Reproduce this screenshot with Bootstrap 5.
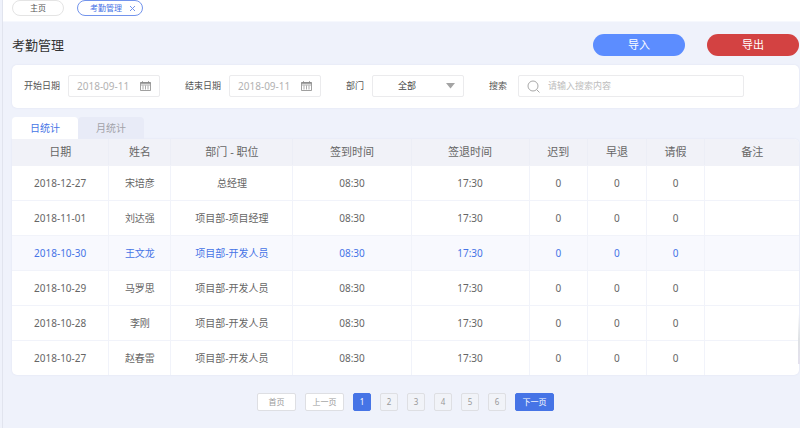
<!DOCTYPE html>
<html lang="zh-CN">
<head>
<meta charset="utf-8">
<meta name="viewport" content="width=device-width, initial-scale=1">
<title>考勤管理</title>
<link href="https://cdn.jsdelivr.net/npm/bootstrap@5.3.0/dist/css/bootstrap.min.css" rel="stylesheet">
<style>
:root { --brand: #4674e6; --page: #eff2fb; --line: #f1f3fa; }
body { font-family: "Noto Sans", "Noto Sans CJK SC", sans-serif; font-size: 10px; line-height: 14px; color: #666; background: var(--page); }
.shell { margin-left: 2px; border-left: 1px solid #e1e4ee; min-height: 100vh; padding-bottom: 16px; }
.topbar { padding: 0 9px 5px; gap: 13px; border-bottom: 1px solid #f6f8fd; }
.page-pill { height: 16px; font-size: 8px; line-height: 14px; border: 1px solid #e4e4e4; border-radius: 8px; background: #fff; color: #555; padding: 0 17px; text-decoration: none; }
.page-pill.current { border-color: #7394ec; color: var(--brand); padding: 0 6px 0 12px; gap: 7px; }
.page-pill button { width: 7px; height: 7px; color: #7394ec; }
.page-body { padding: 12px 1px 0 9px; }
.page-title { font-size: 13px; line-height: 22px; color: #333; }
.head-actions { gap: 22px; }
.btn-round { width: 92px; height: 22px; font-size: 11px; line-height: 20px; padding: 0; border: 0; border-radius: 11px; color: #fff; }
.btn-in, .btn-in:hover { background: #5c8dff; color: #fff; }
.btn-out, .btn-out:hover { background: #d34242; color: #fff; }
.panel { background: #fff; border-radius: 5px; box-shadow: 0 0 2px #dcdff0; }
.filters { padding: 10px 12px 11px; gap: 8px 25px; margin: 9px 0; }
.filters label { font-size: 9px; line-height: 22px; color: #555; }
.field { height: 22px; border: 1px solid #ebebed; border-radius: 2px; background: #fff; }
.field-sm { width: 92px; }
.field-lg { width: 226px; margin-left: 3px; }
.field input { font-size: 10px; line-height: 14px; color: #b2b2b2; outline: 0; min-width: 0; background: none; }
.field-lg input { font-size: 9px; }
.field input::placeholder { color: #bdbdbd; opacity: 1; }
select.field { appearance: none; font-size: 9px; line-height: 20px; color: #444; padding: 0 22px 0 0; text-align: center; text-align-last: center;
  background: #fff url("data:image/svg+xml,%3Csvg xmlns='http://www.w3.org/2000/svg' viewBox='0 0 9 6'%3E%3Cpath d='M0 0h9L4.500 5.500z' fill='%23a4a4a4'/%3E%3C/svg%3E") no-repeat right 8px center / 9px 6px; }
.stat-tabs .nav-link { width: 66px; height: 22px; padding: 0; font-size: 10px; line-height: 22px; text-align: center; color: #a2a2a8; background: #e8ebf7; border: 0; border-radius: 4px 4px 0 0; }
.stat-tabs .nav-link.active { color: var(--brand); background: #fff; }
.table-panel { border-radius: 0 5px 5px 5px; overflow: hidden; }
.records { table-layout: fixed; font-size: 10px; line-height: 14px; text-align: center; }
.records th, .records td { height: 35px; padding: 0; vertical-align: middle; color: #666; border: 0 solid var(--line); border-width: 0 1px 1px 0; }
.records th { height: 26px; font-size: 11px; font-weight: 400; background: #f1f2f8; border-color: #eceef6; border-bottom-color: #f1f2f8; }
.records th:last-child, .records td:last-child { border-right: 0; }
.records tr:last-child td { border-bottom: 0; }
.records tr.chosen td { color: var(--brand); background: #f8f9fe; }
.w-date { width: 12.300%; } .w-name { width: 7.900%; } .w-dept { width: 15.500%; } .w-time { width: 15%; } .w-count { width: 7.450%; }
.pager { gap: 9px; margin: 18px 0 0; }
.pager .page-link { width: 18px; height: 18px; padding: 0; font-size: 8px; line-height: 16px; text-align: center; margin: 0; border: 1px solid #dedfe3; border-radius: 2px; color: #999; background: #f1f3f8; }
.pager .page-link.wide { width: 39px; background: #fff; }
.pager .page-link.filled { background: var(--brand); border-color: var(--brand); color: #fff; }
.edge-handle { position: absolute; right: 0; top: 314px; width: 2px; height: 50px; background: linear-gradient(#e9eaf000, #dfe2e5 50%, #e4e1ee); }
</style>
<script src="https://cdn.jsdelivr.net/npm/bootstrap@5.3.0/dist/js/bootstrap.bundle.min.js" defer></script>
</head>
<body>
<div class="shell">
  <nav class="topbar d-flex bg-white" aria-label="页面">
    <a class="page-pill" href="#home">主页</a>
    <span class="page-pill current d-flex align-items-center"><a class="text-reset text-decoration-none" href="#attendance">考勤管理</a>
      <button type="button" class="btn p-0 border-0 d-flex" aria-label="关闭"><svg width="7" height="7" viewBox="0 0 7 7" fill="none" stroke="currentColor"><path d="M1 1l5 5M6 1L1 6"/></svg></button></span>
  </nav>
  <main class="page-body">
    <header class="d-flex align-items-center justify-content-between">
      <h1 class="page-title m-0 fw-normal">考勤管理</h1>
      <div class="head-actions d-flex">
        <button type="button" class="btn btn-round btn-in">导入</button>
        <button type="button" class="btn btn-round btn-out">导出</button>
      </div>
    </header>

    <form class="panel filters d-flex flex-wrap">
      <div class="d-flex gap-2"><label for="from">开始日期</label>
        <div class="field field-sm d-flex align-items-center px-2"><input id="from" class="border-0 p-0 flex-grow-1 w-100" type="text" value="2018-09-11">
          <button type="button" class="btn p-0 border-0 d-flex" aria-label="选择日期"><svg width="11" height="10" viewBox="0 0 11 10" fill="none" stroke="#888"><path stroke-width=".8" d="M.5 1.500h10v8H.5z"/><path stroke-width="1.500" d="M.5 2h10"/><path stroke-width=".7" d="M1 4h9M3 4.500v4M5.500 4.500v4M8 4.500v4M2.500 0v2M8.500 0v2"/></svg></button></div></div>
      <div class="d-flex gap-2"><label for="to">结束日期</label>
        <div class="field field-sm d-flex align-items-center px-2"><input id="to" class="border-0 p-0 flex-grow-1 w-100" type="text" value="2018-09-11">
          <button type="button" class="btn p-0 border-0 d-flex" aria-label="选择日期"><svg width="11" height="10" viewBox="0 0 11 10" fill="none" stroke="#888"><path stroke-width=".8" d="M.5 1.500h10v8H.5z"/><path stroke-width="1.500" d="M.5 2h10"/><path stroke-width=".7" d="M1 4h9M3 4.500v4M5.500 4.500v4M8 4.500v4M2.500 0v2M8.500 0v2"/></svg></button></div></div>
      <div class="d-flex gap-2"><label for="dept">部门</label>
        <select id="dept" class="field field-sm"><option>全部</option></select></div>
      <div class="d-flex gap-2"><label for="query">搜索</label>
        <div class="field field-lg d-flex align-items-center gap-2 px-2"><svg width="13" height="13" viewBox="0 0 13 13" fill="none" stroke="#a8a8a8"><circle cx="6" cy="6" r="5"/><path d="M9.600 9.600l2.900 2.900"/></svg><input id="query" class="border-0 p-0 flex-grow-1" type="text" placeholder="请输入搜索内容"></div></div>
    </form>

    <div class="nav stat-tabs" role="tablist">
      <button type="button" class="nav-link active" role="tab" aria-selected="true">日统计</button>
      <button type="button" class="nav-link" role="tab" aria-selected="false">月统计</button>
    </div>
    <div class="panel table-panel">
      <table class="table records m-0">
        <thead><tr><th class="w-date">日期</th><th class="w-name">姓名</th><th class="w-dept">部门 - 职位</th><th class="w-time">签到时间</th><th class="w-time">签退时间</th><th class="w-count">迟到</th><th class="w-count">早退</th><th class="w-count">请假</th><th>备注</th></tr></thead>
        <tbody>
          <tr><td>2018-12-27</td><td>宋培彦</td><td>总经理</td><td>08:30</td><td>17:30</td><td>0</td><td>0</td><td>0</td><td></td></tr>
          <tr><td>2018-11-01</td><td>刘达强</td><td>项目部-项目经理</td><td>08:30</td><td>17:30</td><td>0</td><td>0</td><td>0</td><td></td></tr>
          <tr class="chosen"><td>2018-10-30</td><td>王文龙</td><td>项目部-开发人员</td><td>08:30</td><td>17:30</td><td>0</td><td>0</td><td>0</td><td></td></tr>
          <tr><td>2018-10-29</td><td>马罗思</td><td>项目部-开发人员</td><td>08:30</td><td>17:30</td><td>0</td><td>0</td><td>0</td><td></td></tr>
          <tr><td>2018-10-28</td><td>李刚</td><td>项目部-开发人员</td><td>08:30</td><td>17:30</td><td>0</td><td>0</td><td>0</td><td></td></tr>
          <tr><td>2018-10-27</td><td>赵春雷</td><td>项目部-开发人员</td><td>08:30</td><td>17:30</td><td>0</td><td>0</td><td>0</td><td></td></tr>
        </tbody>
      </table>
    </div>

    <nav aria-label="分页">
      <ul class="pagination pager justify-content-center">
        <li><a class="page-link wide" href="#first">首页</a></li>
        <li><a class="page-link wide" href="#prev">上一页</a></li>
        <li><a class="page-link filled" href="#p1" aria-current="page">1</a></li>
        <li><a class="page-link" href="#p2">2</a></li>
        <li><a class="page-link" href="#p3">3</a></li>
        <li><a class="page-link" href="#p4">4</a></li>
        <li><a class="page-link" href="#p5">5</a></li>
        <li><a class="page-link" href="#p6">6</a></li>
        <li><a class="page-link wide filled" href="#next">下一页</a></li>
      </ul>
    </nav>
  </main>
</div>
<div class="edge-handle"></div>
</body>
</html>
